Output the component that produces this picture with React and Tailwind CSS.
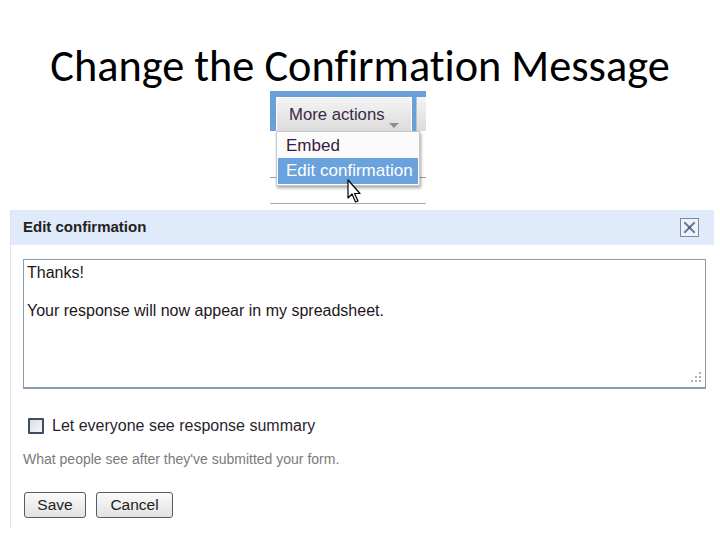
export default function App() {
  return (
    <div className="w-[720px] h-[540px] bg-white overflow-hidden relative" style={{ fontFamily: '"Liberation Sans", Arial, sans-serif' }}>
      {/* Title */}
      <div className="h-[91px] flex items-start justify-center pt-[40px]">
        <h1 className="text-[44.3px] leading-[52px] text-black [font-variant-ligatures:none]" style={{ fontFamily: 'Carlito, Calibri, Lato, sans-serif' }}>
          Change the Confirmation Message
        </h1>
      </div>

      {/* Dropdown screenshot */}
      <div className="ml-[270px] w-[156px] h-[114px] relative bg-white">
        <div className="h-[6px] bg-[#6a9fd9]" />
        <div className="flex h-[34px]">
          <div className="w-[6px] bg-[#6a9fd9]" />
          <div className="w-[136px] border border-white border-b-0 bg-gradient-to-b from-[#f4f4f4] to-[#dcdcdc] relative">
            <span className="absolute left-[12px] top-[7px] text-[16.7px] leading-[19px] text-[#3a2a44]">More actions</span>
            <div className="absolute left-[112px] top-[25px] w-0 h-0 border-l-[5px] border-r-[5px] border-t-[5px] border-l-transparent border-r-transparent border-t-[#8a8f96]" />
          </div>
          <div className="w-[4px] bg-[#6a9fd9]" />
          <div className="flex-1 bg-gradient-to-b from-[#f4f4f4] to-[#dcdcdc] border-l border-[#b9c3cd]" />
        </div>
        <div className="absolute left-0 right-0 top-[86px] h-px bg-[#a0a0a0]" />
        <div className="absolute left-0 right-0 top-[112px] h-px bg-[#a8a8a8]" />
        {/* Menu */}
        <div className="absolute left-[6px] top-[40px] w-[144px] bg-white border border-[#c8c8c8] shadow-[1px_2px_3px_rgba(0,0,0,0.35)] p-[1px]">
          <div className="h-[25px] pl-[8px] flex items-center text-[17px] text-[#3a1a40] bg-[#fbfbfb]">Embed</div>
          <div className="h-[26px] pl-[8px] flex items-center text-[17px] text-white bg-[#6aa2de]">Edit confirmation</div>
        </div>
        {/* Cursor */}
        <svg className="absolute left-[77px] top-[88px]" width="16" height="26" viewBox="0 0 16 26">
          <path d="M1 1 L1 19 L5 15 L8.5 23 L11 22 L7.5 14.5 L13 14.5 Z" fill="white" stroke="black" strokeWidth="1.2" strokeLinejoin="round" />
        </svg>
      </div>

      {/* Dialog */}
      <div className="ml-[10px] mt-[5px] w-[704px] border-l border-[#dde3ea] h-[317px]">
        <div className="h-[35px] bg-[#dfeafb] flex items-center justify-between pl-[12px] pr-[15px]">
          <span className="text-[15px] font-bold text-[#222]">Edit confirmation</span>
          <div className="w-[19px] h-[19px] border border-[#7d8a99] bg-[#eef3fa] flex items-center justify-center">
            <svg width="13" height="13" viewBox="0 0 13 13">
              <path d="M2 2 L11 11 M11 2 L2 11" stroke="#6c7f98" strokeWidth="2" strokeLinecap="square" />
              <rect x="5" y="5" width="3" height="3" fill="#4f6a8c" />
            </svg>
          </div>
        </div>
        <div className="pl-[12px] pt-[14px]">
          <div className="w-[683px] h-[130px] border border-[#8e9aa8] border-b-2 border-b-[#8f9db0] relative pl-[3px] pt-[4px] text-[16px] text-[#1c1620] leading-[18px]">
            <div>Thanks!</div>
            <div className="mt-[20px]">Your response will now appear in my spreadsheet.</div>
            <svg className="absolute right-[3px] bottom-[3px]" width="13" height="13" viewBox="0 0 13 13">
              <rect x="10" y="1" width="2" height="2" fill="#b0b0b0" />
              <rect x="6" y="5" width="2" height="2" fill="#b0b0b0" />
              <rect x="10" y="5" width="2" height="2" fill="#b0b0b0" />
              <rect x="2" y="9" width="2" height="2" fill="#b0b0b0" />
              <rect x="6" y="9" width="2" height="2" fill="#b0b0b0" />
              <rect x="10" y="9" width="2" height="2" fill="#b0b0b0" />
            </svg>
          </div>
          <div className="flex items-center mt-[27px] ml-[5px] h-[19px]">
            <div className="w-[16px] h-[16px] border-2 border-[#3d4f60] bg-gradient-to-br from-[#d8dde2] to-[#f6f7f8] rounded-[1px]" />
            <span className="ml-[8px] text-[16px] text-[#2a1f2d]">Let everyone see response summary</span>
          </div>
          <div className="mt-[16px] text-[14px] leading-[17px] text-[#7a7a7a]">What people see after they've submitted your form.</div>
          <div className="flex gap-[10px] mt-[24px] ml-[1px]">
            <div className="w-[62px] h-[26px] border border-[#4d5e70] rounded-[3px] bg-gradient-to-b from-[#fafafa] to-[#e2e2e2] flex items-center justify-center text-[15.5px] text-[#222]">Save</div>
            <div className="w-[77px] h-[26px] border border-[#4d5e70] rounded-[3px] bg-gradient-to-b from-[#fafafa] to-[#e2e2e2] flex items-center justify-center text-[15.5px] text-[#222]">Cancel</div>
          </div>
        </div>
      </div>
    </div>
  );
}
